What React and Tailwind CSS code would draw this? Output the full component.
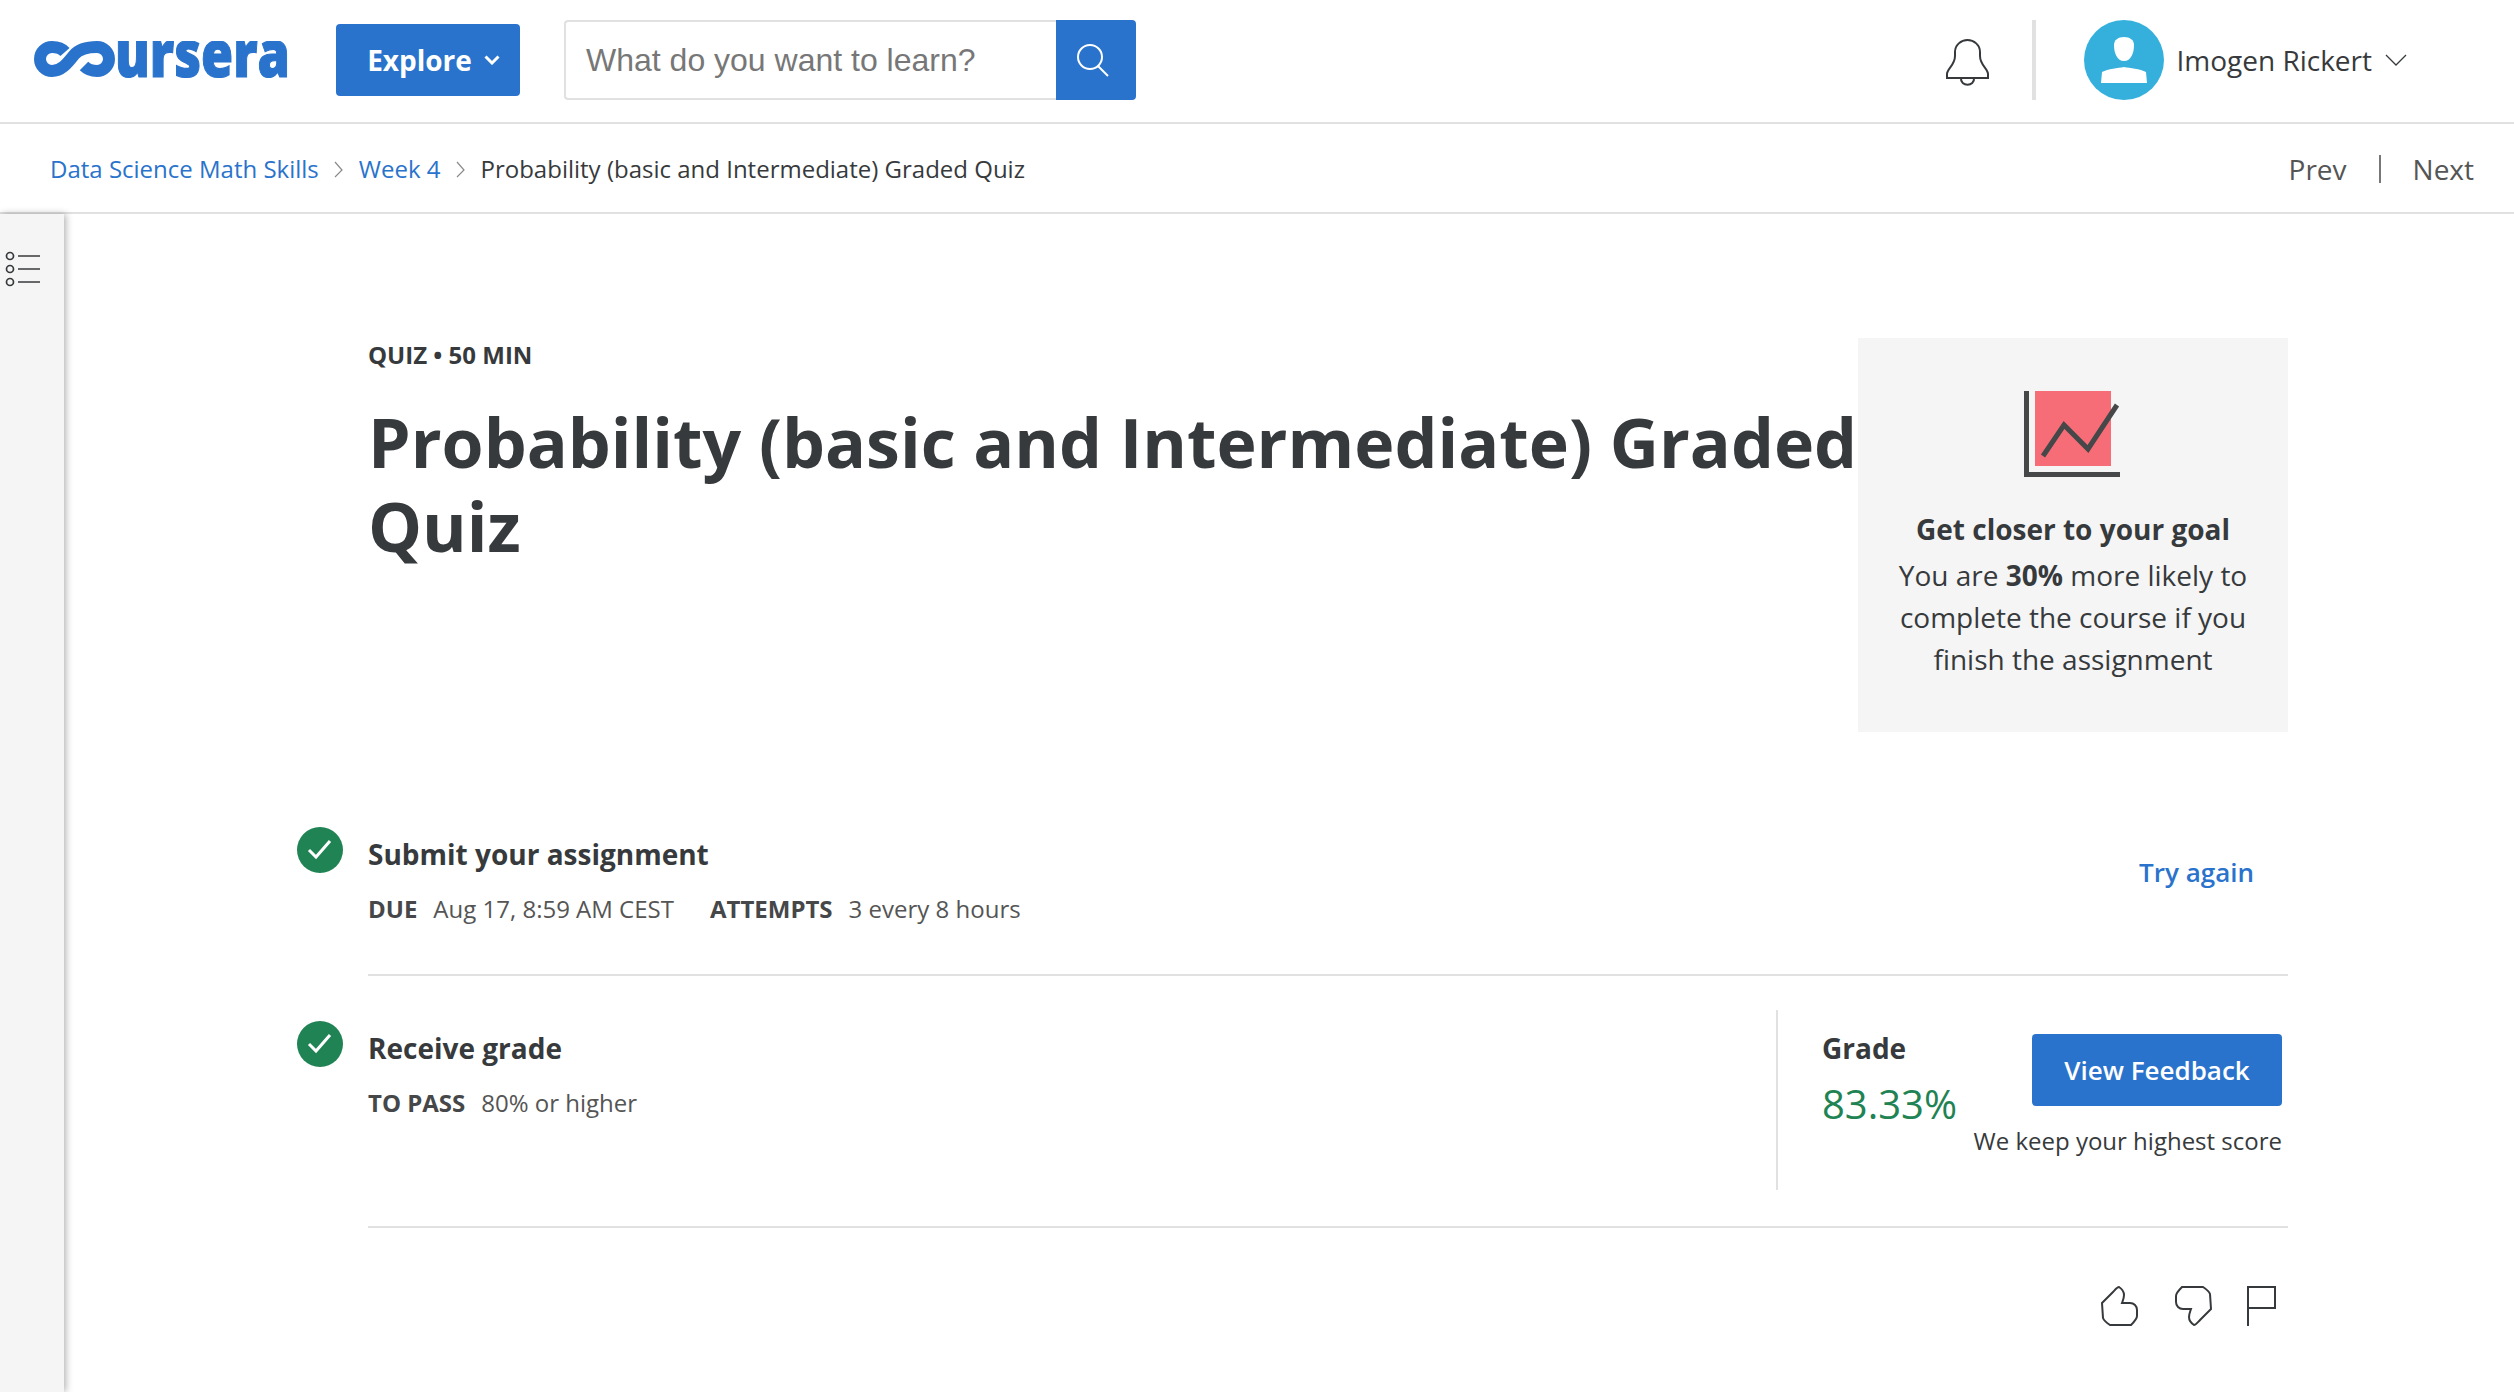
import React from 'react';

const Logo = () => (
  <svg width="256" height="38" viewBox="0 0 256 38" className="shrink-0">
    <path
      d="M31 11 C28 7.500 24 6 18 6 A12 12 0 0 0 18 30 C27 30 33 23 40 14 C45 8 53 6 63 6 A12 12 0 0 1 63 30 C57 30 53 28 50 25"
      fill="none"
      stroke="#2a73cc"
      strokeWidth="12"
    />
    <text
      transform="translate(81 36) scale(1 1.2)"
      textLength="175"
      lengthAdjust="spacingAndGlyphs"
      fill="#2a73cc"
      stroke="#2a73cc"
      strokeWidth="1"
      fontSize="54"
      fontWeight="800"
      fontFamily="'Open Sans', sans-serif"
    >
      ursera
    </text>
  </svg>
);

const Bell = () => (
  <svg width="44" height="48" viewBox="0 0 44 48" fill="none" stroke="#373a3c" strokeWidth="2" className="mt-[6px]">
    <path d="M1 39 H42 V35 C42 30 34 26 34 17 V13 C34 6 28 1 21.500 1 C15 1 9 6 9 13 V17 C9 26 1 30 1 35 Z" />
    <path d="M15 39 C14 48 29 48 28 39" />
  </svg>
);

const Avatar = () => (
  <div className="w-20 h-20 rounded-full bg-[#35b0dc] shrink-0">
    <svg width="80" height="80" viewBox="0 0 80 80" fill="#fff">
      <path d="M40 17 C46 17 50 20 50 25 C50 33 47 41 40 41 C33 41 30 33 30 25 C30 20 34 17 40 17 Z" />
      <path d="M17 63 L18 52 C24 49 34 48 40 47 C46 48 56 49 62 52 L63 63 Z" />
    </svg>
  </div>
);

const Check = () => (
  <div className="w-[46px] h-[46px] rounded-full bg-[#1f8354] shrink-0 mr-[25px] flex items-center justify-center">
    <svg width="26" height="22" viewBox="0 0 26 22" fill="none" stroke="#fff" strokeWidth="3">
      <path d="M2 11 L9 18 L23 2" />
    </svg>
  </div>
);

const Crumb = () => (
  <svg width="10" height="20" viewBox="0 0 10 20" fill="none" stroke="#8a8a8a" strokeWidth="1.200" className="shrink-0">
    <path d="M1 3 L8 11 L1 18" />
  </svg>
);

const ThumbPath = 'M1 17 L12 6 C14 4 16 1 18 1 C21 3 23 6 23 9 C23 12 22 14 21 17 H29 C33 17 36 20 36 24 V30 C36 33 33 36 30 39 H9 C6 37 3 35 2 32 Z';

const Meta = ({ label, value }) => (
  <span className="flex gap-[16px]">
    <span className="font-bold text-[#454749]">{label}</span>
    <span className="text-[#555]">{value}</span>
  </span>
);

export default function App() {
  return (
    <div className="h-[1392px] overflow-hidden bg-white text-[#373a3c] font-['Open_Sans',sans-serif]">
      {/* Top nav */}
      <header className="h-[124px] border-b-2 border-[#e1e1e1] pb-[2px] flex items-center">
        <div className="ml-[34px]"><Logo /></div>
        <button className="ml-[46px] w-[184px] h-[72px] bg-[#2a73cc] rounded text-white text-[28px] font-bold flex items-center justify-center gap-[12px] pl-[11px]">
          Explore
          <svg width="16" height="10" viewBox="0 0 16 10" fill="none" stroke="#fff" strokeWidth="3">
            <path d="M1.500 1.500 L8 8 L14.500 1.500" />
          </svg>
        </button>
        <div className="ml-[44px] flex h-20">
          <div className="w-[492px] border-2 border-r-0 border-[#e1e1e1] rounded-l pl-5 flex items-center text-[32px] text-[#777] font-['Liberation_Sans',sans-serif]">
            What do you want to learn?
          </div>
          <div className="w-20 bg-[#2a73cc] rounded-r flex items-center justify-center">
            <svg width="34" height="34" viewBox="0 0 34 34" fill="none" stroke="#fff" strokeWidth="2" className="-ml-[6px]">
              <circle cx="14" cy="14" r="12" />
              <path d="M22 23 L32 33" />
            </svg>
          </div>
        </div>
        <div className="ml-auto flex items-center">
          <Bell />
          <div className="w-1 h-20 bg-[#e1e1e1] ml-[42px] mr-[48px]" />
          <Avatar />
          <span className="ml-[12px] text-[28px]">Imogen Rickert</span>
          <svg width="22" height="12" viewBox="0 0 22 12" fill="none" stroke="#373a3c" strokeWidth="1.300" className="ml-[13px] mr-[107px]">
            <path d="M1 1 L11 11 L21 1" />
          </svg>
        </div>
      </header>

      {/* Breadcrumb */}
      <div className="h-[90px] border-b-2 border-[#e1e1e1] flex items-center pl-[50px] pt-[2px] text-[24px]">
        <span className="text-[#2a73cc]">Data Science Math Skills</span>
        <span className="mx-[15px]"><Crumb /></span>
        <span className="text-[#2a73cc]">Week 4</span>
        <span className="mx-[15px]"><Crumb /></span>
        <span>Probability (basic and Intermediate) Graded Quiz</span>
        <div className="ml-auto flex items-center text-[28px] text-[#555] pr-[40px]">
          <span>Prev</span>
          <div className="w-0.5 h-7 bg-[#777] mx-[32px]" />
          <span>Next</span>
        </div>
      </div>

      <div className="flex h-[1178px]">
        {/* Collapsed sidebar */}
        <aside className="w-16 shrink-0 bg-[#f5f5f5] shadow-[2px_0_7px_rgba(0,0,0,0.3)] pt-[37px] pl-[5px]">
          <svg width="36" height="36" viewBox="0 0 36 36" fill="none" stroke="#373a3c" strokeWidth="1.700">
            <circle cx="5" cy="5" r="3.500" />
            <circle cx="5" cy="18" r="3.500" />
            <circle cx="5" cy="31" r="3.500" />
            <path d="M13 5 H35 M13 18 H35 M13 31 H35" />
          </svg>
        </aside>

        <main className="ml-[233px] w-[1991px] shrink-0">
          {/* Title + goal card */}
          <div className="flex pl-[71px] pt-[124px]">
            <div className="w-[1490px] shrink-0">
              <div className="text-[24px] font-bold leading-[34px]">QUIZ • 50 MIN</div>
              <h1 className="mt-[28px] text-[68px] leading-[84px] font-bold">
                Probability (basic and Intermediate) Graded Quiz
              </h1>
            </div>
            <div className="w-[430px] h-[394px] bg-[#f5f5f5] flex flex-col items-center pt-[53px] text-center text-[28px] leading-[42px]">
              <svg width="96" height="86" viewBox="0 0 96 86" fill="none" className="shrink-0 -ml-[2px]">
                <rect x="11" y="0" width="76" height="75" fill="#f76d77" />
                <path d="M2.500 0 V83.500 H96" stroke="#454749" strokeWidth="5" />
                <path d="M19 65 L40 34 L64 58 L93 14" stroke="#454749" strokeWidth="5" />
              </svg>
              <div className="mt-[31px] font-bold">Get closer to your goal</div>
              <div className="mt-[4px] w-[370px]">
                You are <b>30%</b> more likely to complete the course if you finish the assignment
              </div>
            </div>
          </div>

          {/* Submit row */}
          <div className="flex mt-[95px]">
            <Check />
            <div className="flex-1 h-[149px] border-b-2 border-[#e1e1e1] flex justify-between">
              <div className="pt-[7px]">
                <div className="text-[28px] leading-[40px] font-bold">Submit your assignment</div>
                <div className="mt-[19px] flex gap-[36px] text-[24px] leading-[32px]">
                  <Meta label="DUE" value="Aug 17, 8:59 AM CEST" />
                  <Meta label="ATTEMPTS" value="3 every 8 hours" />
                </div>
              </div>
              <div className="pt-[26px] pr-[34px] text-[26px] leading-[38px] font-semibold text-[#2a73cc]">Try again</div>
            </div>
          </div>

          {/* Grade row */}
          <div className="flex">
            <div className="mt-[45px]"><Check /></div>
            <div className="flex-1 h-[252px] border-b-2 border-[#e1e1e1] flex">
              <div className="flex-1 pt-[52px]">
                <div className="text-[28px] leading-[40px] font-bold">Receive grade</div>
                <div className="mt-[19px] flex text-[24px] leading-[32px]">
                  <Meta label="TO PASS" value="80% or higher" />
                </div>
              </div>
              <div className="mt-[34px] w-[512px] h-[180px] border-l-2 border-[#e1e1e1] flex justify-between pl-[44px] pr-[6px]">
                <div className="pt-[20px]">
                  <div className="text-[28px] leading-[36px] font-bold">Grade</div>
                  <div className="mt-[10px] text-[40px] leading-[56px] text-[#1f8354]">83.33%</div>
                </div>
                <div className="pt-[24px] flex flex-col items-end">
                  <button className="w-[250px] h-[72px] bg-[#2a73cc] rounded text-white text-[26px] font-[550]">View Feedback</button>
                  <div className="mt-[19px] text-[24px] leading-[32px]">We keep your highest score</div>
                </div>
              </div>
            </div>
          </div>

          {/* Feedback icons */}
          <div className="flex justify-end pr-[12px] pt-[58px]">
            <svg width="38" height="41" viewBox="0 0 38 41" fill="none" stroke="#373a3c" strokeWidth="2">
              <path d={ThumbPath} />
            </svg>
            <svg width="38" height="41" viewBox="0 0 38 41" fill="none" stroke="#373a3c" strokeWidth="2" className="ml-[36px]">
              <path d={ThumbPath} transform="rotate(180 18.500 20)" />
            </svg>
            <svg width="29" height="41" viewBox="0 0 29 41" fill="none" stroke="#373a3c" strokeWidth="2" className="ml-[34px]">
              <path d="M1 40 V1 H28 V22 H1" />
            </svg>
          </div>
        </main>
      </div>
    </div>
  );
}
